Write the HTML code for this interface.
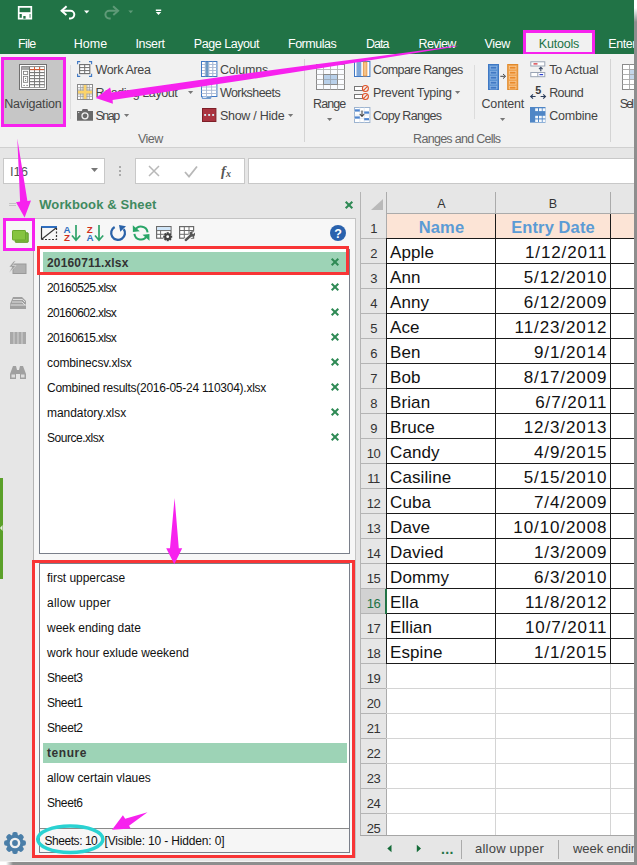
<!DOCTYPE html>
<html><head><meta charset="utf-8">
<style>
*{box-sizing:border-box;margin:0;padding:0}
html,body{width:637px;height:865px;overflow:hidden;background:#fff}
body{font-family:"Liberation Sans",sans-serif;position:relative;color:#222}
.a{position:absolute}
.t{position:absolute;white-space:nowrap;line-height:16px;height:16px}
.tab{color:#fff;font-size:12.5px;top:35px}
.rb{font-size:12.5px;color:#444}
.gl{font-size:12px;color:#666}
.wb{font-size:11.5px;color:#111;left:47px}
.cell{font-size:17px;color:#111;line-height:24px;height:24px;letter-spacing:.1px}
.rn{font-size:13px;letter-spacing:-.5px;color:#333;width:25px;text-align:center;left:361px;line-height:24px;height:24px;padding-top:3px}
svg{position:absolute;overflow:visible}
</style></head><body>

<div class="a" style="left:0;top:0;width:637px;height:54px;background:#217346"></div>
<div class="t" style="left:17.9px;top:35.5px;font-size:12.5px;color:#fff;letter-spacing:-0.581px;">File</div>
<div class="t" style="left:73.8px;top:35.5px;font-size:12.5px;color:#fff;letter-spacing:-0.015px;">Home</div>
<div class="t" style="left:135.5px;top:35.5px;font-size:12.5px;color:#fff;letter-spacing:-0.353px;">Insert</div>
<div class="t" style="left:193.8px;top:35.5px;font-size:12.5px;color:#fff;letter-spacing:-0.46px;">Page Layout</div>
<div class="t" style="left:288.0px;top:35.5px;font-size:12.5px;color:#fff;letter-spacing:-0.485px;">Formulas</div>
<div class="t" style="left:366.0px;top:35.5px;font-size:12.5px;color:#fff;letter-spacing:-1.001px;">Data</div>
<div class="t" style="left:418.5px;top:35.5px;font-size:12.5px;color:#fff;letter-spacing:-0.637px;">Review</div>
<div class="t" style="left:484.5px;top:35.5px;font-size:12.5px;color:#fff;letter-spacing:-0.356px;">View</div>
<div class="a" style="left:523px;top:30px;width:72px;height:25px;background:#f1f1f1;border:3px solid #f722ee"></div>
<div class="t" style="left:538.8px;top:35.5px;font-size:12.5px;color:#217346;letter-spacing:-0.199px;">Kutools</div>
<div class="t" style="left:608.2px;top:35.5px;font-size:12.5px;color:#fff;letter-spacing:-0.394px;">Enter</div>
<svg style="left:0;top:0" width="180" height="30" viewBox="0 0 180 30">
<g fill="none" stroke="#fff" stroke-width="1.700">
<path d="M18.700 6.800h12.600v11.900h-12.600z"/>
<path d="M61.800 10.800h8.700a3.800 3.800 0 0 1 0 7.600h-1.500" stroke-width="2"/>
<path d="M66.600 6.300l-5 4.500 4.800 4.200" stroke-width="2"/>
</g>
<rect x="19" y="12.200" width="12" height="1.800" fill="#fff"/>
<rect x="21.800" y="14" width="7.800" height="4.700" fill="#fff"/>
<rect x="23.300" y="16" width="2.300" height="2.700" fill="#217346"/>
<path d="M84 10.500h5.400l-2.700 3z" fill="#fff"/>
<g fill="none" stroke="#5f9a78" stroke-width="2">
<path d="M117.900 10.800h-8.700a3.800 3.800 0 0 0 0 7.600h1.500"/>
<path d="M113.100 6.300l5 4.500 -4.800 4.200"/>
</g>
<path d="M128.300 10.500h4.800l-2.400 2.800z" fill="#5f9a78"/>
<path d="M155.800 9.500h5.400v1.400h-5.400z M155.800 12h5.400l-2.700 3z" fill="#fff"/>
</svg>
<div class="a" style="left:0;top:54px;width:637px;height:93px;background:#f1f1f1"></div>
<div class="a" style="left:0;top:147px;width:637px;height:1px;background:#d0d0d0"></div>
<div class="a" style="left:1px;top:57px;width:65px;height:70px;background:#c6c6c6;border:3px solid #f722ee"></div>
<div class="t" style="left:4.2px;top:95.8px;font-size:12.5px;color:#444;letter-spacing:-0.163px;">Navigation</div>
<svg style="left:19px;top:64px" width="28" height="26" viewBox="0 0 28 26">
<rect x="0.500" y="0.500" width="27" height="25" fill="#fff" stroke="#707070"/>
<rect x="2.200" y="2.200" width="23.600" height="21.600" fill="#777"/>
<rect x="3" y="5.600" width="7" height="17.400" fill="#fff"/>
<rect x="3" y="3" width="7" height="2.600" fill="#a6a6a6"/>
<g fill="#fff"><rect x="11" y="3.10" width="4.100" height="1.900"/><rect x="11" y="6.12" width="4.100" height="1.900"/><rect x="11" y="9.14" width="4.100" height="1.900"/><rect x="11" y="12.16" width="4.100" height="1.900"/><rect x="11" y="15.18" width="4.100" height="1.900"/><rect x="11" y="18.20" width="4.100" height="1.900"/><rect x="11" y="21.22" width="4.100" height="1.900"/><rect x="16" y="3.10" width="4.100" height="1.900"/><rect x="16" y="6.12" width="4.100" height="1.900"/><rect x="16" y="9.14" width="4.100" height="1.900"/><rect x="16" y="12.16" width="4.100" height="1.900"/><rect x="16" y="15.18" width="4.100" height="1.900"/><rect x="16" y="18.20" width="4.100" height="1.900"/><rect x="16" y="21.22" width="4.100" height="1.900"/><rect x="21.1" y="3.10" width="4.100" height="1.900"/><rect x="21.1" y="6.12" width="4.100" height="1.900"/><rect x="21.1" y="9.14" width="4.100" height="1.900"/><rect x="21.1" y="12.16" width="4.100" height="1.900"/><rect x="21.1" y="15.18" width="4.100" height="1.900"/><rect x="21.1" y="18.20" width="4.100" height="1.900"/><rect x="21.1" y="21.22" width="4.100" height="1.900"/></g>
<path d="M11 5.600h14.200M15.500 3.200v2.600M20.600 3.200v2.600" stroke="#e0552a" stroke-width="0.900"/>
<rect x="4.500" y="7.300" width="4.200" height="3.200" fill="#fff" stroke="#777" stroke-width=".8"/>
<rect x="4.500" y="12.300" width="4.200" height="6" fill="#fff" stroke="#777" stroke-width=".8"/>
<path d="M6.600 14.400v.1M6.600 16.400v.1" stroke="#777" stroke-width="1" stroke-linecap="square"/>
<path d="M4.200 21.400h1.800M7.200 21.400h1.800" stroke="#777" stroke-width=".8"/>
</svg>
<div class="a" style="left:70px;top:65px;width:1px;height:54px;background:#dcdcdc"></div>
<div class="t" style="left:95.5px;top:62.0px;font-size:12.5px;color:#444;letter-spacing:-0.341px;">Work Area</div>
<div class="t" style="left:95.5px;top:85.3px;font-size:12.5px;color:#444;letter-spacing:-0.405px;">Reading Layout</div>
<div class="t" style="left:95.5px;top:108.1px;font-size:12.5px;color:#444;letter-spacing:-1.465px;">Snap</div>
<div class="t" style="left:219.9px;top:62.0px;font-size:12.5px;color:#444;letter-spacing:-0.154px;">Columns</div>
<div class="t" style="left:219.9px;top:85.3px;font-size:12.5px;color:#444;letter-spacing:-0.552px;">Worksheets</div>
<div class="t" style="left:219.9px;top:108.1px;font-size:12.5px;color:#444;letter-spacing:-0.26px;">Show / Hide</div>
<div class="t" style="left:373.0px;top:62.0px;font-size:12.5px;color:#444;letter-spacing:-0.59px;">Compare Ranges</div>
<div class="t" style="left:373.0px;top:85.3px;font-size:12.5px;color:#444;letter-spacing:-0.32px;">Prevent Typing</div>
<div class="t" style="left:373.0px;top:108.1px;font-size:12.5px;color:#444;letter-spacing:-0.664px;">Copy Ranges</div>
<div class="t" style="left:549.2px;top:62.0px;font-size:12.5px;color:#444;letter-spacing:-0.166px;">To Actual</div>
<div class="t" style="left:549.2px;top:85.3px;font-size:12.5px;color:#444;letter-spacing:-0.609px;">Round</div>
<div class="t" style="left:549.2px;top:108.1px;font-size:12.5px;color:#444;letter-spacing:-0.204px;">Combine</div>
<div class="t" style="left:313.1px;top:95.7px;font-size:12.5px;color:#444;letter-spacing:-0.909px;">Range</div>
<div class="t" style="left:481.5px;top:95.7px;font-size:12.5px;color:#444;letter-spacing:-0.164px;">Content</div>
<div class="t" style="left:619.8px;top:95.7px;font-size:12.5px;color:#444;letter-spacing:-1.884px;">Sel</div>
<div class="t" style="left:137.9px;top:131.3px;font-size:12.5px;color:#666;letter-spacing:-0.523px;">View</div>
<div class="t" style="left:413.1px;top:131.3px;font-size:12.5px;color:#666;letter-spacing:-0.711px;">Ranges and Cells</div>
<div class="a" style="left:304px;top:59px;width:1px;height:83px;background:#d4d4d4"></div>
<div class="a" style="left:610px;top:59px;width:1px;height:83px;background:#d4d4d4"></div>
<div class="a" style="left:474px;top:65px;width:1px;height:54px;background:#dcdcdc"></div>
<svg style="left:187.8px;top:91.0px" width="6" height="4" viewBox="0 0 6 4"><path d="M0 0h5.200l-2.600 3z" fill="#777"/></svg>
<svg style="left:124.3px;top:114.0px" width="6" height="4" viewBox="0 0 6 4"><path d="M0 0h5.200l-2.600 3z" fill="#777"/></svg>
<svg style="left:288.3px;top:114.0px" width="6" height="4" viewBox="0 0 6 4"><path d="M0 0h5.200l-2.600 3z" fill="#777"/></svg>
<svg style="left:454.8px;top:91.0px" width="6" height="4" viewBox="0 0 6 4"><path d="M0 0h5.200l-2.600 3z" fill="#777"/></svg>
<svg style="left:327.3px;top:118.0px" width="6" height="4" viewBox="0 0 6 4"><path d="M0 0h5.200l-2.600 3z" fill="#777"/></svg>
<svg style="left:499.8px;top:118.0px" width="6" height="4" viewBox="0 0 6 4"><path d="M0 0h5.200l-2.600 3z" fill="#777"/></svg>
<svg style="left:77px;top:61px" width="16" height="16" viewBox="0 0 16 16">
<path d="M0.600 3.200v-2.600h2.600M12 0.600h2.600v2.600M14.600 12.800v2.600h-2.600M3.200 15.400h-2.600v-2.600" fill="none" stroke="#3f78c4" stroke-width="1.100"/>
<rect x="2.600" y="3.600" width="10.200" height="9" fill="#fff" stroke="#6e6e6e" stroke-width="1.100"/>
<path d="M2.600 6.600h10.200M2.600 9.600h10.200M7.700 3.600v9" stroke="#6e6e6e" stroke-width="1"/>
</svg>
<svg style="left:77px;top:84px" width="16" height="16" viewBox="0 0 16 16">
<rect x="0.500" y="0.500" width="15" height="15" fill="#fff" stroke="#8a8a8a"/>
<path d="M0.500 3.700h15M0.500 12.300h15M3.700 0.500v15M12.300 0.500v15" stroke="#a0a0a0" stroke-width=".9"/>
<path d="M6.100 0.500v15M9.900 0.500v15M0.500 6.100h15M0.500 9.900h15" stroke="#8a8a8a" stroke-width=".9"/>
<path d="M6.700 1h2.700v14h-2.700z M1 6.700h14v2.700h-14z" fill="#fbd36b"/>
</svg>
<svg style="left:77px;top:108px" width="16" height="13" viewBox="0 0 16 13">
<path d="M0 3h4.800l.8-2h4.800l.8 2h4.800v9.800h-16z" fill="#6a6a6a"/>
<circle cx="8" cy="7.800" r="3" fill="none" stroke="#f1f1f1" stroke-width="1.300"/>
<rect x="1.200" y="4" width="1" height="1" fill="#f1f1f1"/>
</svg>
<svg style="left:201px;top:61px" width="17" height="16" viewBox="0 0 17 16">
<rect x="0.500" y="0.500" width="15.400" height="15" fill="#fff" stroke="#3f78c4"/>
<rect x="4.600" y="1" width="2.900" height="14" fill="#6b98c4"/>
<path d="M4.300 0.500v15M7.800 0.500v15M11.800 0.500v15" stroke="#8fa8cc" stroke-width=".9"/>
<path d="M1 3.500h3M1 6.500h3M1 9.500h3M1 12.500h3M8 3.500h7.500M8 6.500h7.500M8 9.500h7.500M8 12.500h7.500" stroke="#a8b8d4" stroke-width=".9"/>
</svg>
<svg style="left:201px;top:83px" width="17" height="16" viewBox="0 0 17 16">
<rect x="0.500" y="0.500" width="15.400" height="13" fill="#fff" stroke="#3f78c4"/>
<path d="M5.500 0.500v13M10.600 0.500v13M0.500 4h15.400M0.500 7.300h15.400M0.500 10.500h15.400" stroke="#a8b8d4" stroke-width=".9"/>
<path d="M1.200 13.500v1.800h8.600v-1.800" fill="#fff" stroke="#3f78c4" stroke-width=".9"/>
<rect x="5.500" y="13.700" width="3.800" height="1.400" fill="#6b98c4"/>
</svg>
<svg style="left:202px;top:108px" width="15" height="14" viewBox="0 0 15 14">
<rect x="0.500" y="0.500" width="13.400" height="13" fill="#aa3440" stroke="#7e1f28"/>
<rect x="2.200" y="6" width="1.900" height="1.900" fill="#d4ecf2"/><rect x="6.200" y="6" width="1.900" height="1.900" fill="#d4ecf2"/><rect x="10.200" y="6" width="1.900" height="1.900" fill="#d4ecf2"/>
</svg>
<svg style="left:316px;top:64px" width="29" height="26" viewBox="0 0 29 26">
<rect x="0.500" y="0.500" width="28" height="25" fill="#fafcff" stroke="#8a8a8a"/>
<path d="M0.500 5.500h28M0.500 10.500h28M0.500 15.500h28M0.500 20.500h28M7.500 0.500v25M14.500 0.500v25M21.500 0.500v25" stroke="#b4b4b4" stroke-width=".9"/>
<rect x="7.500" y="10.500" width="14" height="10" fill="#b8d0ea" stroke="#8a8a8a"/>
<path d="M7.500 15.500h14M14.500 10.500v10" stroke="#9aa8b8" stroke-width=".9"/>
</svg>
<svg style="left:354px;top:61px" width="17" height="16" viewBox="0 0 17 16">
<rect x="0.500" y="0.500" width="15.400" height="15" fill="#fff" stroke="#3f78c4"/>
<rect x="3.300" y="1" width="3.200" height="14" fill="#7da7d8"/><rect x="9.300" y="1" width="3.600" height="14" fill="#f3c28a" stroke="#e8903a" stroke-width=".8"/>
<path d="M3 .5v15M6.800 .5v15" stroke="#3f78c4" stroke-width=".7"/>
</svg>
<svg style="left:354px;top:85px" width="17" height="16" viewBox="0 0 17 16">
<rect x="0.500" y="1.500" width="8.500" height="4" fill="#fff" stroke="#777"/>
<rect x="0.500" y="9.500" width="8.500" height="4" fill="#fff" stroke="#777"/>
<circle cx="11.400" cy="3.500" r="3" fill="#f1f1f1" stroke="#e0552a" stroke-width="1.100"/><path d="M9.300 5.600l4.200-4.200" stroke="#e0552a" stroke-width="1.100"/>
<circle cx="11.400" cy="11.500" r="3" fill="#f1f1f1" stroke="#e0552a" stroke-width="1.100"/><path d="M9.300 13.600l4.200-4.200" stroke="#e0552a" stroke-width="1.100"/>
</svg>
<svg style="left:354px;top:107px" width="17" height="16" viewBox="0 0 17 16">
<rect x="0.500" y="0.500" width="15.400" height="15" fill="#fff" stroke="#9db4d0"/>
<path d="M0.500 4.500h15.400M0.500 8h15.400M0.500 11.500h15.400M5.800 0.500v15M10.200 0.500v15" stroke="#dde4ee" stroke-width=".8"/>
<rect x="1" y="2.300" width="4.800" height="2.200" fill="#4f86d0"/><rect x="10.200" y="4.500" width="4.800" height="2.200" fill="#4f86d0"/>
<rect x="1" y="9.400" width="4.800" height="2.200" fill="#4f86d0"/><rect x="10.200" y="11.100" width="4.800" height="2.200" fill="#4f86d0"/>
<path d="M8 3.500v5.500M5.800 7l2.200 2.400 2.200-2.400" stroke="#444" stroke-width="1.100" fill="none"/>
</svg>
<svg style="left:488px;top:64px" width="31" height="26" viewBox="0 0 31 26">
<rect x="0.500" y="0.500" width="10" height="25" fill="#5b93d3" stroke="#3f78c4"/>
<rect x="19.700" y="0.500" width="10" height="25" fill="#f2a552" stroke="#e08a2c"/>
<g fill="#3f78c4" stroke="#8db4e4" stroke-width=".7"><rect x="2.300" y="2.4" width="6.400" height="2.600"/><rect x="2.300" y="7.4" width="6.400" height="2.600"/><rect x="2.300" y="12.4" width="6.400" height="2.600"/><rect x="2.300" y="17.4" width="6.400" height="2.600"/><rect x="2.300" y="22.4" width="6.400" height="2.600"/></g>
<g fill="#ea8a2a" stroke="#f8cc98" stroke-width=".7"><rect x="21.500" y="2.4" width="6.400" height="2.600"/><rect x="21.500" y="7.4" width="6.400" height="2.600"/><rect x="21.500" y="12.4" width="6.400" height="2.600"/><rect x="21.500" y="17.4" width="6.400" height="2.600"/><rect x="21.500" y="22.4" width="6.400" height="2.600"/></g>
<path d="M12.300 12.300h4.500M15 10l2.600 2.300-2.600 2.300" stroke="#444" stroke-width="1" fill="none"/>
</svg>
<svg style="left:530px;top:61px" width="16" height="16" viewBox="0 0 16 16">
<rect x="0.800" y="0.800" width="14" height="4.200" fill="#fff" stroke="#9aa4b4"/><rect x="3.500" y="2.300" width="4" height="1.200" fill="#d0222a"/>
<rect x="0.800" y="11.500" width="14" height="4.200" fill="#fff" stroke="#9aa4b4"/><path d="M7.800 11.500v4.200" stroke="#9aa4b4"/><rect x="9.500" y="13" width="3.600" height="1.200" fill="#2a3fd0"/>
<path d="M10.800 10.200v-3.600M9 8.200l1.800-1.900 1.800 1.900" stroke="#3a4a66" fill="none" stroke-width="1.100"/>
</svg>
<svg style="left:530px;top:85px" width="17" height="16" viewBox="0 0 17 16">
<text x="5.300" y="8.800" font-family="Liberation Sans, sans-serif" font-size="10.800" font-weight="bold" fill="#3c3c3c">5</text>
<path d="M0.800 11.500h4.800M10.600 11.500h4.800" stroke="#2c3e5c" stroke-width="1.100"/>
<path d="M3 9.300l-2.300 2.200 2.300 2.200M13.200 9.300l2.300 2.200-2.300 2.200" fill="none" stroke="#2c3e5c" stroke-width="1.100"/>
</svg>
<svg style="left:530.400px;top:107px" width="16" height="16" viewBox="0 0 16 16">
<rect x="0" y="0" width="15.500" height="15.600" fill="#4f86c6"/>
<g fill="#f4f8fc"><rect x="5.2" y="1.3" width="2.800" height="2.8"/><rect x="5.2" y="8.8" width="2.800" height="2.6"/><rect x="5.2" y="12.4" width="2.800" height="2.6"/><rect x="9" y="1.3" width="2.800" height="2.8"/><rect x="9" y="8.8" width="2.800" height="2.6"/><rect x="9" y="12.4" width="2.800" height="2.6"/><rect x="12.6" y="1.3" width="2.800" height="2.8"/><rect x="12.6" y="8.8" width="2.800" height="2.6"/><rect x="12.6" y="12.4" width="2.800" height="2.6"/></g>
</svg>
<svg style="left:622px;top:64px" width="14" height="26" viewBox="0 0 14 26">
<rect x="0.500" y="0.500" width="20" height="25" fill="#fff" stroke="#8a8a8a"/>
<rect x="7.500" y="5.500" width="10" height="10" fill="#c5d6ea"/>
<path d="M0.500 5.500h14M0.500 10.500h14M0.500 15.500h14M0.500 20.500h14M7.500 0.500v25" stroke="#a8a8a8" stroke-width=".9"/>
</svg>
<div class="a" style="left:0;top:148px;width:637px;height:44px;background:#e6e6e6"></div>
<div class="a" style="left:3px;top:158px;width:102px;height:26px;background:#fff;border:1px solid #c8c8c8"></div>
<div class="t" style="left:10px;top:163.500px;font-size:13px;color:#555">I16</div>
<svg style="left:91px;top:168px" width="8" height="5" viewBox="0 0 8 5"><path d="M0 0h7l-3.500 4z" fill="#777"/></svg>
<div class="a" style="left:119px;top:166px;width:2px;height:2px;background:#aaa;box-shadow:0 4px 0 #aaa,0 8px 0 #aaa"></div>
<div class="a" style="left:135px;top:158px;width:110px;height:26px;background:#fff;border:1px solid #c8c8c8"></div>
<div class="a" style="left:248px;top:158px;width:392px;height:26px;background:#fff;border:1px solid #c8c8c8"></div>
<svg style="left:140px;top:160px" width="100" height="22" viewBox="0 0 100 22">
<path d="M9 6l10 10M19 6l-10 10" stroke="#b8b8b8" stroke-width="1.500" fill="none"/>
<path d="M45 12l4 4.500 8-10" stroke="#b8b8b8" stroke-width="1.800" fill="none"/>
<text x="81" y="16" font-family="Liberation Serif, serif" font-style="italic" font-weight="bold" font-size="14" fill="#555">f</text>
<text x="86" y="17" font-family="Liberation Serif, serif" font-style="italic" font-weight="bold" font-size="10" fill="#555">x</text>
</svg>
<div class="a" style="left:0;top:192px;width:360px;height:673px;background:#e6e6e6"></div>
<div class="a" style="left:33px;top:218px;width:323px;height:640px;background:#f7f7f7;border-left:1px solid #b4b4b4;border-top:1px solid #c4c4c4;border-right:1px solid #c4c4c4"></div>
<div class="a" style="left:9px;top:203px;width:7px;height:1px;background:#c4c4c4;box-shadow:0 2px 0 #c4c4c4"></div>
<div class="t" style="left:39.2px;top:196.8px;font-size:13px;color:#3f8a60;letter-spacing:0.124px;font-weight:bold;">Workbook &amp; Sheet</div>
<svg style="left:345px;top:201px" width="8" height="8" viewBox="0 0 8 8"><path d="M.7.700l6.600 6.600M7.300.700L.7 7.300" stroke="#2f8a55" stroke-width="2.100"/></svg>
<div class="a" style="left:0;top:478px;width:3px;height:101px;background:#5ba02a"></div>
<svg style="left:0;top:525px" width="3" height="6" viewBox="0 0 3 6"><path d="M2.500 0v6l-2.500-3z" fill="#e8f0e0"/></svg>
<div class="a" style="left:3px;top:218px;width:32px;height:33px;background:#f7f7f7;border:3px solid #f722ee"></div>
<svg style="left:12px;top:230px" width="17" height="13" viewBox="0 0 17 13">
<rect x="3.200" y="2.800" width="13" height="9.500" rx=".6" fill="#7ab83c" stroke="#5e9a28"/>
<rect x="0.500" y="0.500" width="13" height="9.500" rx=".6" fill="#86c440" stroke="#6aa82e"/>
</svg>
<svg style="left:8px;top:261px" width="19" height="13" viewBox="0 0 19 13">
<rect x="5" y="3" width="13" height="9.500" fill="#b0b0b0" stroke="#9a9a9a"/>
<path d="M6 0l-5 6h3l-3 6 7-7.500h-3.500l3-4.500z" fill="#9a9a9a" stroke="#e6e6e6" stroke-width=".6"/>
</svg>
<svg style="left:10px;top:297px" width="17" height="13" viewBox="0 0 17 13">
<path d="M3 0h9l4 4v8h-16v-5z" fill="#a0a0a0"/>
<path d="M3 2.500h9.500l2.500 2.500M2 5h10l3 3M0.500 8h15.500" stroke="#e6e6e6" stroke-width=".9" fill="none"/>
</svg>
<svg style="left:10px;top:332px" width="16" height="12" viewBox="0 0 16 12">
<rect width="16" height="12" fill="#a8a8a8"/><path d="M4 0v12M8 0v12M12 0v12" stroke="#d8d8d8" stroke-width=".9"/>
</svg>
<svg style="left:10px;top:366px" width="16" height="13" viewBox="0 0 16 13">
<path d="M3 0h3l1 4h2l1-4h3l3 8v5h-6v-5h-4v5h-6v-5z" fill="#a0a0a0"/>
<rect x="1.500" y="8.500" width="3.500" height="3" fill="#ddd"/><rect x="11" y="8.500" width="3.500" height="3" fill="#ddd"/>
</svg>
<svg style="left:3.500px;top:831.800px" width="22" height="22" viewBox="-11 -11 22 22">
<g fill="#4a7ea8"><rect x="-2.700" y="-10.900" width="5.400" height="6" rx="2" transform="rotate(0)"/><rect x="-2.700" y="-10.900" width="5.400" height="6" rx="2" transform="rotate(45)"/><rect x="-2.700" y="-10.900" width="5.400" height="6" rx="2" transform="rotate(90)"/><rect x="-2.700" y="-10.900" width="5.400" height="6" rx="2" transform="rotate(135)"/><rect x="-2.700" y="-10.900" width="5.400" height="6" rx="2" transform="rotate(180)"/><rect x="-2.700" y="-10.900" width="5.400" height="6" rx="2" transform="rotate(225)"/><rect x="-2.700" y="-10.900" width="5.400" height="6" rx="2" transform="rotate(270)"/><rect x="-2.700" y="-10.900" width="5.400" height="6" rx="2" transform="rotate(315)"/>
<circle r="8.600"/></g><circle r="5.300" fill="#f0f0f0"/><circle r="2.900" fill="#4a7ea8"/></svg>
<svg style="left:41px;top:226px" width="160" height="16" viewBox="0 0 160 16">
<!-- 1 -->
<path d="M0 1h16" stroke="#2f6fc0" stroke-width="2"/>
<path d="M0.500 1.500v12" stroke="#333" stroke-width="1.200"/>
<path d="M15.500 2v11.500h-15" fill="none" stroke="#333" stroke-width="1.200" stroke-dasharray="2 1.500"/>
<path d="M1 13l14-11" stroke="#333" stroke-width="1.100"/>
<!-- 2 AZ -->
<text x="22.600" y="6.700" font-family="Liberation Sans, sans-serif" font-size="9.800" font-weight="bold" fill="#2f6fc0">A</text>
<text x="23" y="15.200" font-family="Liberation Sans, sans-serif" font-size="9.800" font-weight="bold" fill="#d0301e">Z</text>
<path d="M35 -1v14M31 9.500l4 4.700 4.200-4.700" fill="none" stroke="#2fa36a" stroke-width="1.700"/>
<!-- 3 ZA -->
<text x="45.800" y="6.700" font-family="Liberation Sans, sans-serif" font-size="9.800" font-weight="bold" fill="#d0301e">Z</text>
<text x="45.400" y="15.200" font-family="Liberation Sans, sans-serif" font-size="9.800" font-weight="bold" fill="#2f6fc0">A</text>
<path d="M58 -1v14M54 9.500l4 4.700 4.200-4.700" fill="none" stroke="#2fa36a" stroke-width="1.700"/>
<!-- 4 refresh ccw -->
<path d="M73.650 1A6.900 6.900 0 1 0 82.750 3.040" fill="none" stroke="#2a62a8" stroke-width="2.300"/>
<path d="M78 -1L85 0.200L79.300 5.800Z" fill="#2a62a8"/>
<!-- 5 sync -->
<path d="M94.200 4.200A6.600 6.600 0 0 1 106.600 6.400" fill="none" stroke="#2aa568" stroke-width="2"/>
<path d="M105.800 10A6.600 6.600 0 0 1 93.400 7.800" fill="none" stroke="#2aa568" stroke-width="2"/>
<path d="M91.800 -0.800L91.900 5.900L98.800 5.300Z" fill="#2aa568"/>
<path d="M108.500 14.800L108.400 8.100L101.500 8.700Z" fill="#2aa568"/>
<!-- 6 table gear -->
<rect x="115.600" y="0.600" width="14.400" height="11.600" fill="#fff" stroke="#6a6a6a" stroke-width="1.200"/>
<rect x="116.200" y="1.200" width="13.200" height="3.200" fill="#cfe6fa"/>
<path d="M115.600 4.600h14.400M115.600 8.300h10M119.600 4.600v7.600" stroke="#6a6a6a" stroke-width="1"/>
<g transform="translate(126.700 10.700)"><circle r="4.600" fill="#fff"/>
<g fill="#444"><rect x="-1.100" y="-4.500" width="2.200" height="9"/><rect x="-1.100" y="-4.500" width="2.200" height="9" transform="rotate(45)"/><rect x="-1.100" y="-4.500" width="2.200" height="9" transform="rotate(90)"/><rect x="-1.100" y="-4.500" width="2.200" height="9" transform="rotate(135)"/><circle r="3.200"/></g><circle r="1.400" fill="#fff"/></g>
<!-- 7 table wrench -->
<rect x="138.600" y="0.600" width="14" height="11.600" fill="#fff" stroke="#6a6a6a" stroke-width="1.200"/>
<path d="M138.600 4.500h14M138.600 8.300h14M143.300 0.600v11.600M148 0.600v11.600" stroke="#6a6a6a" stroke-width="1"/>
<path d="M144.500 14.300L150.500 8.800" stroke="#fff" stroke-width="4.500"/>
<path d="M144.800 14L150.800 8.500" stroke="#555" stroke-width="2.400" stroke-linecap="round"/>
<circle cx="151.300" cy="8" r="2.700" fill="#555"/><path d="M151.600 7.600l2.800-2.600" stroke="#f3f3f3" stroke-width="1.700"/>
</svg>
<svg style="left:330px;top:225px" width="16" height="16" viewBox="0 0 16 16"><circle cx="8" cy="8" r="8" fill="#2a62ad"/>
<text x="8" y="12.500" text-anchor="middle" font-family="Liberation Sans, sans-serif" font-size="12.500" font-weight="bold" fill="#fff">?</text></svg>
<div class="a" style="left:39px;top:249px;width:311px;height:305px;background:#fff;border:1px solid #7a7f8a"></div>
<div class="a" style="left:43px;top:252px;width:304px;height:20px;background:#9dd3b6"></div>
<div class="t" style="left:47px;top:254.5px;font-size:12px;color:#333;letter-spacing:0.157px;font-weight:bold;">20160711.xlsx</div>
<svg style="left:331px;top:258.2px" width="8" height="8" viewBox="0 0 8 8"><path d="M.7.700l6.600 6.600M7.300.700L.7 7.300" stroke="#2f8a55" stroke-width="2"/></svg>
<div class="t" style="left:47px;top:279.5px;font-size:12px;color:#111;letter-spacing:-0.633px;">20160525.xlsx</div>
<svg style="left:331px;top:283.2px" width="8" height="8" viewBox="0 0 8 8"><path d="M.7.700l6.600 6.600M7.300.700L.7 7.300" stroke="#2f8a55" stroke-width="2"/></svg>
<div class="t" style="left:47px;top:304.5px;font-size:12px;color:#111;letter-spacing:-0.633px;">20160602.xlsx</div>
<svg style="left:331px;top:308.2px" width="8" height="8" viewBox="0 0 8 8"><path d="M.7.700l6.600 6.600M7.300.700L.7 7.300" stroke="#2f8a55" stroke-width="2"/></svg>
<div class="t" style="left:47px;top:329.5px;font-size:12px;color:#111;letter-spacing:-0.633px;">20160615.xlsx</div>
<svg style="left:331px;top:333.2px" width="8" height="8" viewBox="0 0 8 8"><path d="M.7.700l6.600 6.600M7.300.700L.7 7.300" stroke="#2f8a55" stroke-width="2"/></svg>
<div class="t" style="left:47px;top:354.5px;font-size:12px;color:#111;letter-spacing:-0.119px;">combinecsv.xlsx</div>
<svg style="left:331px;top:358.2px" width="8" height="8" viewBox="0 0 8 8"><path d="M.7.700l6.600 6.600M7.300.700L.7 7.300" stroke="#2f8a55" stroke-width="2"/></svg>
<div class="t" style="left:47px;top:379.5px;font-size:12px;color:#111;letter-spacing:-0.255px;">Combined results(2016-05-24 110304).xlsx</div>
<svg style="left:331px;top:383.2px" width="8" height="8" viewBox="0 0 8 8"><path d="M.7.700l6.600 6.600M7.300.700L.7 7.300" stroke="#2f8a55" stroke-width="2"/></svg>
<div class="t" style="left:47px;top:404.5px;font-size:12px;color:#111;letter-spacing:-0.047px;">mandatory.xlsx</div>
<svg style="left:331px;top:408.2px" width="8" height="8" viewBox="0 0 8 8"><path d="M.7.700l6.600 6.600M7.300.700L.7 7.300" stroke="#2f8a55" stroke-width="2"/></svg>
<div class="t" style="left:47px;top:429.5px;font-size:12px;color:#111;letter-spacing:-0.472px;">Source.xlsx</div>
<svg style="left:331px;top:433.2px" width="8" height="8" viewBox="0 0 8 8"><path d="M.7.700l6.600 6.600M7.300.700L.7 7.300" stroke="#2f8a55" stroke-width="2"/></svg>
<div class="a" style="left:37px;top:246px;width:312px;height:29px;border:3px solid #f83536;box-shadow:inset 0 1px 0 #fff"></div>
<div class="a" style="left:39px;top:563px;width:311px;height:290px;background:#fff;border:1px solid #7a7f8a"></div>
<div class="a" style="left:40px;top:828px;width:309px;height:24px;background:#f6f6f6;border-top:1px solid #8a8a8a"></div>
<div class="a" style="left:43px;top:743px;width:304px;height:20px;background:#9dd3b6"></div>
<div class="t" style="left:47px;top:570.0px;font-size:12px;color:#111;letter-spacing:-0.036px;">first uppercase</div>
<div class="t" style="left:47px;top:595.0px;font-size:12px;color:#111;letter-spacing:0.223px;">allow upper</div>
<div class="t" style="left:47px;top:620.0px;font-size:12px;color:#111;letter-spacing:-0.018px;">week ending date</div>
<div class="t" style="left:47px;top:645.0px;font-size:12px;color:#111;letter-spacing:-0.033px;">work hour exlude weekend</div>
<div class="t" style="left:47px;top:670.0px;font-size:12px;color:#111;letter-spacing:-0.407px;">Sheet3</div>
<div class="t" style="left:47px;top:695.0px;font-size:12px;color:#111;letter-spacing:-0.407px;">Sheet1</div>
<div class="t" style="left:47px;top:720.0px;font-size:12px;color:#111;letter-spacing:-0.407px;">Sheet2</div>
<div class="t" style="left:47px;top:745.0px;font-size:12px;color:#333;letter-spacing:0.565px;font-weight:bold;">tenure</div>
<div class="t" style="left:47px;top:770.0px;font-size:12px;color:#111;letter-spacing:-0.049px;">allow certain vlaues</div>
<div class="t" style="left:47px;top:795.0px;font-size:12px;color:#111;letter-spacing:-0.407px;">Sheet6</div>
<div class="t" style="left:44.5px;top:832.5px;font-size:12px;color:#111;letter-spacing:-0.453px;">Sheets: 10</div>
<div class="t" style="left:104.5px;top:832.5px;font-size:12px;color:#111;letter-spacing:-0.161px;">[Visible: 10 - Hidden: 0]</div>
<div class="a" style="left:32px;top:560px;width:322.500px;height:298px;border:3px solid #f83536"></div>
<div class="a" style="left:360px;top:192px;width:277px;height:644px;background:#fff"></div>
<div class="a" style="left:360px;top:192px;width:277px;height:22px;background:#e6e6e6;border-bottom:1px solid #ababab"></div>
<div class="a" style="left:360px;top:192px;width:27px;height:644px;background:#e6e6e6;border-left:1px solid #b4b4b4;border-right:1px solid #ababab"></div>
<svg style="left:371px;top:198.500px" width="12" height="11" viewBox="0 0 12 11"><path d="M12 0v11h-12z" fill="#b9b9b9"/></svg>
<div class="a" style="left:386px;top:192px;width:1px;height:22px;background:#ababab"></div>
<div class="a" style="left:495px;top:192px;width:1px;height:22px;background:#ababab"></div>
<div class="a" style="left:610px;top:192px;width:1px;height:22px;background:#ababab"></div>
<div class="t" style="left:387px;width:109px;text-align:center;top:196px;font-size:12.5px;color:#333">A</div>
<div class="t" style="left:496px;width:114px;text-align:center;top:196px;font-size:12.5px;color:#333">B</div>
<div class="a" style="left:387px;top:214px;width:247px;height:24px;background:#fce4d6"></div>
<div class="a" style="left:361px;top:238px;width:273px;height:1px;background:#d4d4d4"></div>
<div class="a" style="left:361px;top:263px;width:273px;height:1px;background:#d4d4d4"></div>
<div class="a" style="left:361px;top:288px;width:273px;height:1px;background:#d4d4d4"></div>
<div class="a" style="left:361px;top:313px;width:273px;height:1px;background:#d4d4d4"></div>
<div class="a" style="left:361px;top:338px;width:273px;height:1px;background:#d4d4d4"></div>
<div class="a" style="left:361px;top:363px;width:273px;height:1px;background:#d4d4d4"></div>
<div class="a" style="left:361px;top:388px;width:273px;height:1px;background:#d4d4d4"></div>
<div class="a" style="left:361px;top:413px;width:273px;height:1px;background:#d4d4d4"></div>
<div class="a" style="left:361px;top:438px;width:273px;height:1px;background:#d4d4d4"></div>
<div class="a" style="left:361px;top:463px;width:273px;height:1px;background:#d4d4d4"></div>
<div class="a" style="left:361px;top:488px;width:273px;height:1px;background:#d4d4d4"></div>
<div class="a" style="left:361px;top:513px;width:273px;height:1px;background:#d4d4d4"></div>
<div class="a" style="left:361px;top:538px;width:273px;height:1px;background:#d4d4d4"></div>
<div class="a" style="left:361px;top:563px;width:273px;height:1px;background:#d4d4d4"></div>
<div class="a" style="left:361px;top:588px;width:273px;height:1px;background:#d4d4d4"></div>
<div class="a" style="left:361px;top:613px;width:273px;height:1px;background:#d4d4d4"></div>
<div class="a" style="left:361px;top:638px;width:273px;height:1px;background:#d4d4d4"></div>
<div class="a" style="left:361px;top:663px;width:273px;height:1px;background:#d4d4d4"></div>
<div class="a" style="left:361px;top:688px;width:273px;height:1px;background:#d4d4d4"></div>
<div class="a" style="left:361px;top:713px;width:273px;height:1px;background:#d4d4d4"></div>
<div class="a" style="left:361px;top:738px;width:273px;height:1px;background:#d4d4d4"></div>
<div class="a" style="left:361px;top:763px;width:273px;height:1px;background:#d4d4d4"></div>
<div class="a" style="left:361px;top:788px;width:273px;height:1px;background:#d4d4d4"></div>
<div class="a" style="left:361px;top:813px;width:273px;height:1px;background:#d4d4d4"></div>
<div class="a" style="left:495px;top:214px;width:1px;height:622px;background:#d4d4d4"></div>
<div class="a" style="left:610px;top:214px;width:1px;height:622px;background:#d4d4d4"></div>
<div class="a" style="left:361px;top:238px;width:25px;height:1px;background:#b4b4b4"></div>
<div class="a" style="left:361px;top:263px;width:25px;height:1px;background:#b4b4b4"></div>
<div class="a" style="left:361px;top:288px;width:25px;height:1px;background:#b4b4b4"></div>
<div class="a" style="left:361px;top:313px;width:25px;height:1px;background:#b4b4b4"></div>
<div class="a" style="left:361px;top:338px;width:25px;height:1px;background:#b4b4b4"></div>
<div class="a" style="left:361px;top:363px;width:25px;height:1px;background:#b4b4b4"></div>
<div class="a" style="left:361px;top:388px;width:25px;height:1px;background:#b4b4b4"></div>
<div class="a" style="left:361px;top:413px;width:25px;height:1px;background:#b4b4b4"></div>
<div class="a" style="left:361px;top:438px;width:25px;height:1px;background:#b4b4b4"></div>
<div class="a" style="left:361px;top:463px;width:25px;height:1px;background:#b4b4b4"></div>
<div class="a" style="left:361px;top:488px;width:25px;height:1px;background:#b4b4b4"></div>
<div class="a" style="left:361px;top:513px;width:25px;height:1px;background:#b4b4b4"></div>
<div class="a" style="left:361px;top:538px;width:25px;height:1px;background:#b4b4b4"></div>
<div class="a" style="left:361px;top:563px;width:25px;height:1px;background:#b4b4b4"></div>
<div class="a" style="left:361px;top:588px;width:25px;height:1px;background:#b4b4b4"></div>
<div class="a" style="left:361px;top:613px;width:25px;height:1px;background:#b4b4b4"></div>
<div class="a" style="left:361px;top:638px;width:25px;height:1px;background:#b4b4b4"></div>
<div class="a" style="left:361px;top:663px;width:25px;height:1px;background:#b4b4b4"></div>
<div class="a" style="left:361px;top:688px;width:25px;height:1px;background:#b4b4b4"></div>
<div class="a" style="left:361px;top:713px;width:25px;height:1px;background:#b4b4b4"></div>
<div class="a" style="left:361px;top:738px;width:25px;height:1px;background:#b4b4b4"></div>
<div class="a" style="left:361px;top:763px;width:25px;height:1px;background:#b4b4b4"></div>
<div class="a" style="left:361px;top:788px;width:25px;height:1px;background:#b4b4b4"></div>
<div class="a" style="left:361px;top:813px;width:25px;height:1px;background:#b4b4b4"></div>
<div class="a" style="left:387px;top:238px;width:247px;height:1px;background:#1a1a1a"></div>
<div class="a" style="left:387px;top:263px;width:247px;height:1px;background:#1a1a1a"></div>
<div class="a" style="left:387px;top:288px;width:247px;height:1px;background:#1a1a1a"></div>
<div class="a" style="left:387px;top:313px;width:247px;height:1px;background:#1a1a1a"></div>
<div class="a" style="left:387px;top:338px;width:247px;height:1px;background:#1a1a1a"></div>
<div class="a" style="left:387px;top:363px;width:247px;height:1px;background:#1a1a1a"></div>
<div class="a" style="left:387px;top:388px;width:247px;height:1px;background:#1a1a1a"></div>
<div class="a" style="left:387px;top:413px;width:247px;height:1px;background:#1a1a1a"></div>
<div class="a" style="left:387px;top:438px;width:247px;height:1px;background:#1a1a1a"></div>
<div class="a" style="left:387px;top:463px;width:247px;height:1px;background:#1a1a1a"></div>
<div class="a" style="left:387px;top:488px;width:247px;height:1px;background:#1a1a1a"></div>
<div class="a" style="left:387px;top:513px;width:247px;height:1px;background:#1a1a1a"></div>
<div class="a" style="left:387px;top:538px;width:247px;height:1px;background:#1a1a1a"></div>
<div class="a" style="left:387px;top:563px;width:247px;height:1px;background:#1a1a1a"></div>
<div class="a" style="left:387px;top:588px;width:247px;height:1px;background:#1a1a1a"></div>
<div class="a" style="left:387px;top:613px;width:247px;height:1px;background:#1a1a1a"></div>
<div class="a" style="left:387px;top:638px;width:247px;height:1px;background:#1a1a1a"></div>
<div class="a" style="left:387px;top:663px;width:247px;height:1px;background:#1a1a1a"></div>
<div class="a" style="left:386px;top:238px;width:1px;height:426px;background:#1a1a1a"></div>
<div class="a" style="left:495px;top:214px;width:1px;height:450px;background:#1a1a1a"></div>
<div class="a" style="left:610px;top:214px;width:1px;height:450px;background:#1a1a1a"></div>
<div class="a" style="left:361px;top:589px;width:25px;height:24px;background:#d2d2d2"></div>
<div class="a" style="left:385px;top:589px;width:2px;height:25px;background:#217346"></div>
<div class="t rn" style="top:214px">1</div>
<div class="t rn" style="top:239px">2</div>
<div class="t rn" style="top:264px">3</div>
<div class="t rn" style="top:289px">4</div>
<div class="t rn" style="top:314px">5</div>
<div class="t rn" style="top:339px">6</div>
<div class="t rn" style="top:364px">7</div>
<div class="t rn" style="top:389px">8</div>
<div class="t rn" style="top:414px">9</div>
<div class="t rn" style="top:439px">10</div>
<div class="t rn" style="top:464px">11</div>
<div class="t rn" style="top:489px">12</div>
<div class="t rn" style="top:514px">13</div>
<div class="t rn" style="top:539px">14</div>
<div class="t rn" style="top:564px">15</div>
<div class="t rn" style="top:589px;color:#217346">16</div>
<div class="t rn" style="top:614px">17</div>
<div class="t rn" style="top:639px">18</div>
<div class="t rn" style="top:664px">19</div>
<div class="t rn" style="top:689px">20</div>
<div class="t rn" style="top:714px">21</div>
<div class="t rn" style="top:739px">22</div>
<div class="t rn" style="top:764px">23</div>
<div class="t rn" style="top:789px">24</div>
<div class="t rn" style="top:814px;height:22px;overflow:hidden">25</div>
<div class="t cell" style="left:387px;width:109px;text-align:center;top:214.700px;font-weight:bold;color:#5b9bd5;font-size:16.500px">Name</div>
<div class="t cell" style="left:496px;width:114px;text-align:center;top:214.700px;font-weight:bold;color:#5b9bd5;font-size:16.500px">Entry Date</div>
<div class="t cell" style="left:390px;top:240.5px">Apple</div>
<div class="t cell" style="right:30.5px;top:240.5px;letter-spacing:.9px;margin-right:-.9px">1/12/2011</div>
<div class="t cell" style="left:390px;top:265.5px">Ann</div>
<div class="t cell" style="right:30.5px;top:265.5px;letter-spacing:.9px;margin-right:-.9px">5/12/2010</div>
<div class="t cell" style="left:390px;top:290.5px">Anny</div>
<div class="t cell" style="right:30.5px;top:290.5px;letter-spacing:.9px;margin-right:-.9px">6/12/2009</div>
<div class="t cell" style="left:390px;top:315.5px">Ace</div>
<div class="t cell" style="right:30.5px;top:315.5px;letter-spacing:.9px;margin-right:-.9px">11/23/2012</div>
<div class="t cell" style="left:390px;top:340.5px">Ben</div>
<div class="t cell" style="right:30.5px;top:340.5px;letter-spacing:.9px;margin-right:-.9px">9/1/2014</div>
<div class="t cell" style="left:390px;top:365.5px">Bob</div>
<div class="t cell" style="right:30.5px;top:365.5px;letter-spacing:.9px;margin-right:-.9px">8/17/2009</div>
<div class="t cell" style="left:390px;top:390.5px">Brian</div>
<div class="t cell" style="right:30.5px;top:390.5px;letter-spacing:.9px;margin-right:-.9px">6/7/2011</div>
<div class="t cell" style="left:390px;top:415.5px">Bruce</div>
<div class="t cell" style="right:30.5px;top:415.5px;letter-spacing:.9px;margin-right:-.9px">12/3/2013</div>
<div class="t cell" style="left:390px;top:440.5px">Candy</div>
<div class="t cell" style="right:30.5px;top:440.5px;letter-spacing:.9px;margin-right:-.9px">4/9/2015</div>
<div class="t cell" style="left:390px;top:465.5px">Casiline</div>
<div class="t cell" style="right:30.5px;top:465.5px;letter-spacing:.9px;margin-right:-.9px">5/15/2010</div>
<div class="t cell" style="left:390px;top:490.5px">Cuba</div>
<div class="t cell" style="right:30.5px;top:490.5px;letter-spacing:.9px;margin-right:-.9px">7/4/2009</div>
<div class="t cell" style="left:390px;top:515.5px">Dave</div>
<div class="t cell" style="right:30.5px;top:515.5px;letter-spacing:.9px;margin-right:-.9px">10/10/2008</div>
<div class="t cell" style="left:390px;top:540.5px">Davied</div>
<div class="t cell" style="right:30.5px;top:540.5px;letter-spacing:.9px;margin-right:-.9px">1/3/2009</div>
<div class="t cell" style="left:390px;top:565.5px">Dommy</div>
<div class="t cell" style="right:30.5px;top:565.5px;letter-spacing:.9px;margin-right:-.9px">6/3/2010</div>
<div class="t cell" style="left:390px;top:590.5px">Ella</div>
<div class="t cell" style="right:30.5px;top:590.5px;letter-spacing:.9px;margin-right:-.9px">11/8/2012</div>
<div class="t cell" style="left:390px;top:615.5px">Ellian</div>
<div class="t cell" style="right:30.5px;top:615.5px;letter-spacing:.9px;margin-right:-.9px">10/7/2011</div>
<div class="t cell" style="left:390px;top:640.5px">Espine</div>
<div class="t cell" style="right:30.5px;top:640.5px;letter-spacing:.9px;margin-right:-.9px">1/1/2015</div>
<div class="a" style="left:360px;top:835px;width:277px;height:30px;background:#e6e6e6;border-top:1px solid #a6a6a6"></div>
<svg style="left:386.300px;top:843.800px" width="70" height="10" viewBox="0 0 70 10"><path d="M5.500 0.800v7.400l-4.200-3.700zM30.800 0.800v7.400l4.200-3.700z" fill="#146b38"/></svg>
<div class="t" style="left:441px;top:840.500px;font-size:14px;font-weight:bold;color:#217346;letter-spacing:.3px">...</div>
<div class="a" style="left:461px;top:840px;width:1px;height:19px;background:#ababab"></div>
<div class="a" style="left:558px;top:840px;width:1px;height:19px;background:#ababab"></div>
<div class="t" style="left:475px;top:840.5px;font-size:13px;color:#444;letter-spacing:0.231px;">allow upper</div>
<div class="t" style="left:573px;top:840.5px;font-size:13px;color:#444;letter-spacing:-0.074px;width:61px;overflow:hidden;">week ending date</div>
<svg style="left:0;top:0" width="637" height="865" viewBox="0 0 637 865">
<g fill="#f722ee">
<path d="M459 45.85 L452 46.37 L414 51.47 L367 57.68 L320 63.68 L280 68.97 L250 72.97 L210 78.56 L170 84.25 L111.4 92.4 L110.1 87.6 L95.7 97.9 L112.9 103.7 L112.6 99.9 L170 91.15 L210 85.26 L250 79.27 L280 74.57 L320 68.28 L367 60.68 L414 53.27 L452 47.37 Z"/>
<path d="M17.300 138.500 L20.100 201.600 L16 202.200 L24.600 217.600 L31 200.600 L27.400 201 Z"/>
<path d="M174.600 498 L170 548.200 L166.200 548.200 L174.300 564.200 L182.200 548.200 L178.800 548.200 Z"/>
<path d="M147.500 812.200 L125.200 818.800 L122.900 815.300 L112 829.800 L130.800 828.600 L129 825.800 Z"/>
</g>
<ellipse cx="70.300" cy="839.300" rx="32.600" ry="13.300" fill="none" stroke="#2ad2d2" stroke-width="3.500"/>
</svg>
<div class="a" style="left:0;top:861px;width:637px;height:1px;background:#f4f4f4"></div>
<div class="a" style="left:0;top:862px;width:637px;height:3px;background:linear-gradient(90deg,#fff 0,#fff 6px,#8e8e8e 13px,#8e8e8e 100%)"></div>
<div class="a" style="left:634px;top:0;width:3px;height:865px;background:linear-gradient(#fff 0,#fff 8px,#8e8e8e 22px,#8e8e8e 100%)"></div>
</body></html>
